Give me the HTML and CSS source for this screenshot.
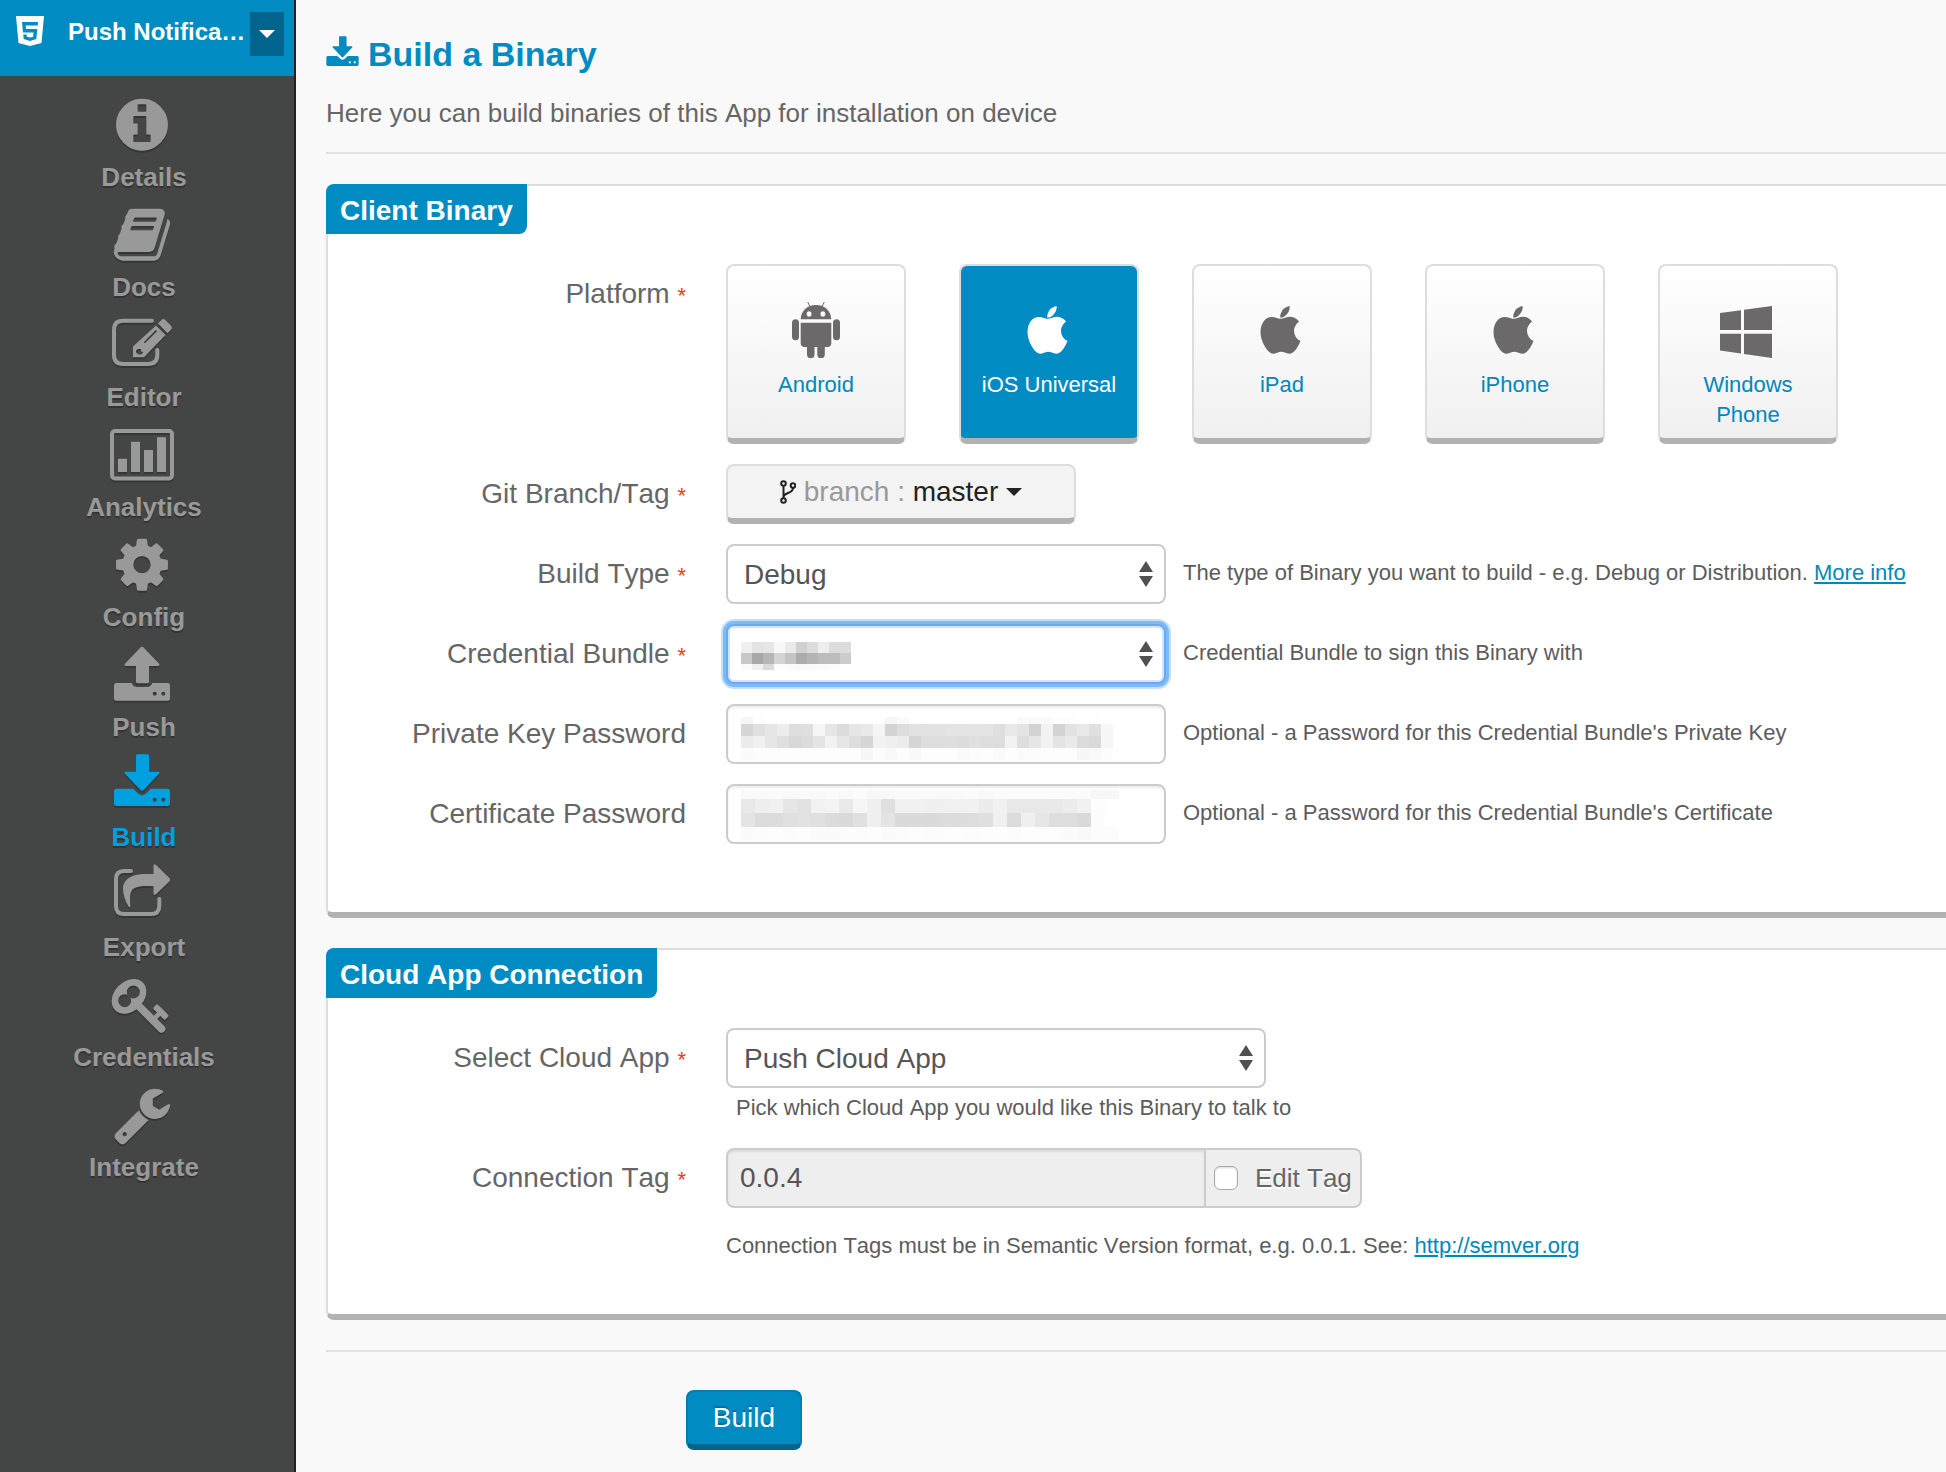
FILE: index.html
```html
<!DOCTYPE html>
<html lang="en">
<head>
<meta charset="utf-8">
<title>Build a Binary</title>
<meta name="viewport" content="width=device-width, initial-scale=1">
<link rel="stylesheet" href="styles.css">
<script src="mosaic.js" defer></script>
</head>
<body>
<svg class="defs" aria-hidden="true">
  <symbol id="apple" viewBox="0 0 60 56">
    <path transform="translate(3 4) scale(.0287)" d="M1585 1215q-39 125-123 250-129 196-257 196-49 0-140-32-86-32-151-32-61 0-142 33-81 34-132 34-152 0-301-259-147-261-147-503 0-228 113-374 113-144 284-144 72 0 177 30 104 30 138 30 45 0 143-34 102-34 173-34 119 0 213 65 52 36 104 100-79 67-114 118-65 94-65 207 0 124 69 223t158 126zm-376-1173q0 61-29 136-30 75-93 138-54 54-108 72-37 11-104 17 3-149 78-257 74-107 250-148 1 3 2.500 11t2.500 11q0 4 .500 10t.500 10z"/>
  </symbol>
  <symbol id="updown" viewBox="0 0 14 26">
    <path d="M7 0L14 11H0ZM0 15H14L7 26Z"/>
  </symbol>
  <symbol id="download" viewBox="4 1 56 52">
    <path d="M27.500 1.300H37.500Q39 1.300 39 2.800V18.700H48Q50.500 19 48.800 21L33.300 37.200Q32 38.500 30.700 37.200L15.200 21Q13.500 19 16 18.700H26V2.800Q26 1.300 27.500 1.300Z"/>
    <path fill-rule="evenodd" d="M6.500 35.700H22Q23.500 35.700 24.500 37L28 40.500Q32 43.800 36 40.500L39.500 37Q40.500 35.700 42 35.700H57.500Q60 35.700 60 38.200V50.500Q60 53 57.500 53H6.500Q4 53 4 50.500V38.200Q4 35.700 6.500 35.700ZM42.700 46.700a2 2 0 1 0 4 0a2 2 0 1 0-4 0ZM51.300 46.700a2 2 0 1 0 4 0a2 2 0 1 0-4 0Z"/>
  </symbol>
</svg>

<div class="layout">
  <aside class="sidebar">
    <div class="project">
      <svg class="project-logo" viewBox="0 0 28 30" aria-hidden="true"><path fill="#fff" d="M0 0H28L25.500 27 14 30 2.500 27Z"/><path class="project-mark" d="M6 6H22L21.700 9.500H9.700L10 13H21.300L20.300 23 14 25 7.700 23 7.300 18.500H10.600L10.900 20.700 14 21.600 17.100 20.700 17.500 16.400H7Z"/></svg>
      <span class="project-name">Push Notifica…</span>
      <button class="project-toggle" type="button" aria-label="Switch project"><span class="caret"></span></button>
    </div>
    <nav class="nav">
      <a class="nav-item" href="#details"><svg viewBox="0 0 68 64" aria-hidden="true"><path transform="translate(1.700 1.400) scale(.0338)" d="M1152 1376v-160q0-14-9-23t-23-9h-96v-512q0-14-9-23t-23-9h-320q-14 0-23 9t-9 23v160q0 14 9 23t23 9h96v320h-96q-14 0-23 9t-9 23v160q0 14 9 23t23 9h448q14 0 23-9t9-23zm-128-896v-160q0-14-9-23t-23-9h-192q-14 0-23 9t-9 23v160q0 14 9 23t23 9h192q14 0 23-9t9-23zm640 416q0 209-103 385.500t-279.500 279.500-385.500 103-385.500-103-279.500-279.500-103-385.500 103-385.500 279.500-279.500 385.500-103 385.500 103 279.500 279.500 103 385.500z"/></svg>Details</a>
      <a class="nav-item" href="#docs"><svg viewBox="0 0 68 64" aria-hidden="true"><path transform="translate(1.700 1.400) scale(.0338)" d="M1703 478q40 57 18 129l-275 906q-19 64-76.500 107.500t-122.500 43.500h-923q-77 0-148.500-53.500t-99.500-131.500q-24-67-2-127 0-4 3-27t4-37q1-8-3-21.500t-3-19.500q2-11 8-21t16.500-23.500 16.500-23.500q23-38 45-91.500t30-91.500q3-10 .5-30t-.5-28q3-11 17-28t17-23q21-36 42-92t25-90q1-9-2.500-32t.5-28q4-13 22-30.500t22-22.500q19-26 42.500-84.500t27.500-96.500q1-8-3-25.500t-2-26.500q2-8 9-18t18-23 17-21q8-12 16.500-30.500t15-35 16-36 19.500-32 26.500-23.500 36-11.500 47.500 5.500l-1 3q38-9 51-9h761q74 0 114 56t18 130l-274 906q-36 119-71.500 153.500t-128.500 34.500h-869q-27 0-38 15-11 16-1 43 24 70 144 70h923q29 0 56-15.500t35-41.500l300-987q7-22 5-57 38 15 59 43zm-1064 2q-4 13 2 22.500t20 9.500h608q13 0 25.500-9.500t16.500-22.500l21-64q4-13-2-22.500t-20-9.500h-608q-13 0-25.500 9.500t-16.500 22.500zm-83 256q-4 13 2 22.500t20 9.500h608q13 0 25.500-9.500t16.500-22.500l21-64q4-13-2-22.500t-20-9.500h-608q-13 0-25.500 9.500t-16.500 22.500z"/></svg>Docs</a>
      <a class="nav-item" href="#editor"><svg viewBox="0 0 68 64" aria-hidden="true"><path class="line" d="M42 7.700H13Q4 7.700 4 17V42Q4 51 13 51H38Q47.300 51 47.300 42V37"/><path fill-rule="evenodd" d="M46 12.500L55.500 22 34 44.300H23V33.500ZM33.800 29.200L34.900 30.300 47 18.200 45.900 17.100ZM26 37.500V39.500L28.500 41.500H31L33.500 39 31 38.500V36H28Z"/><path d="M48 10.500L51.500 7Q53.300 5 55.300 7L61 12.700Q62.700 14.700 61 16.700L57.500 20.200Z"/></svg>Editor</a>
      <a class="nav-item" href="#analytics"><svg viewBox="0 0 68 64" aria-hidden="true"><rect class="line" x="2" y="8" width="60" height="47.500" rx="3"/><path d="M8 35.700H17V49H8ZM21 18.700H30V49H21ZM34 27H43V49H34ZM47 14.300H56V49H47Z"/></svg>Analytics</a>
      <a class="nav-item" href="#config"><svg viewBox="0 0 68 64" aria-hidden="true"><path transform="translate(1.700 1.400) scale(.0338)" d="M1152 896q0-106-75-181t-181-75-181 75-75 181 75 181 181 75 181-75 75-181zm512-109v222q0 12-8 23t-20 13l-185 28q-19 54-39 91 35 50 107 138 10 12 10 25t-9 23q-27 37-99 108t-94 71q-12 0-26-9l-138-108q-44 23-91 38-16 136-29 186-7 28-36 28h-222q-14 0-24.500-8.500t-11.500-21.500l-28-184q-49-16-90-37l-141 107q-10 9-25 9-14 0-25-11-126-114-165-168-7-10-7-23 0-12 8-23 15-21 51-66.500t54-70.500q-27-50-41-99l-183-27q-13-2-21-12.500t-8-23.500v-222q0-12 8-23t19-13l186-28q14-46 39-92-40-57-107-138-10-12-10-24 0-10 9-23 26-36 98.500-107.500t94.500-71.500q13 0 26 10l138 107q44-23 91-38 16-136 29-186 7-28 36-28h222q14 0 24.500 8.500t11.500 21.500l28 184q49 16 90 37l142-107q9-9 24-9 13 0 25 10 129 119 165 170 7 8 7 22 0 12-8 23-15 21-51 66.500t-54 70.500q26 50 41 98l183 28q13 2 21 12.500t8 23.500z"/></svg>Config</a>
      <a class="nav-item" href="#push"><svg viewBox="0 0 68 64" aria-hidden="true"><path d="M30.700 4.300Q32 3 33.300 4.300L48.800 20.500Q50.500 22.700 48 23H39V38.800Q39 40.300 37.500 40.300H27.500Q26 40.300 26 38.800V23H16Q13.500 22.700 15.200 20.500Z"/><path fill-rule="evenodd" d="M6.500 40H21.700Q23 44 27 44H37Q41 44 42.300 40H57.500Q60 40 60 42.500V55.200Q60 57.700 57.500 57.700H6.500Q4 57.700 4 55.200V42.500Q4 40 6.500 40ZM42.700 50.700a2 2 0 1 0 4 0a2 2 0 1 0-4 0ZM51.300 50.700a2 2 0 1 0 4 0a2 2 0 1 0-4 0Z"/></svg>Push</a>
      <a class="nav-item is-active" href="#build" aria-current="page"><svg viewBox="0 0 68 64" aria-hidden="true"><use href="#download" x="4" y="1" width="56" height="52"/></svg>Build</a>
      <a class="nav-item" href="#export"><svg viewBox="0 0 68 64" aria-hidden="true"><path class="line" d="M21 8H14Q6 8 6 16V43Q6 51 14 51H41Q49.300 51 49.300 43V36"/><path d="M43.500 3Q43.500 0 46 2L59.300 15Q60.700 16.700 59.300 18.500L46 31.300Q43.500 33 43.500 30V23.300C30 22.500 24 24 21.500 28C19.500 32 20 38 20.300 43Q20 45.300 18.500 43.500C15 38 13 31 13 26C13 15 24 11 35 11H43.500Z"/></svg>Export</a>
      <a class="nav-item" href="#credentials"><svg viewBox="0 0 68 64" aria-hidden="true"><path transform="translate(1.700 1.700) scale(.0338)" d="M832 512q0-80-56-136t-136-56-136 56-56 136q0 42 19 83-41-19-83-19-80 0-136 56t-56 136 56 136 136 56 136-56 56-136q0-42-19-83 41 19 83 19 80 0 136-56t56-136zm851 704q0 17-49 66t-66 49q-9 0-28.500-16t-36.500-33-38.500-40-24.500-26l-96 96 220 220q28 28 28 68 0 42-39 81t-81 39q-40 0-68-28l-671-671q-176 131-365 131-163 0-265.500-102.500t-102.500-265.500q0-160 95-313t248-248 313-95q163 0 265.500 102.500t102.500 265.500q0 189-131 365l355 355 96-96q-3-3-26-24.500t-40-38.500-33-36.500-16-28.500q0-17 49-66t66-49q13 0 23 10 6 6 46 44.500t82 79.500 86.500 86 73 78 28.500 41z"/></svg>Credentials</a>
      <a class="nav-item" href="#integrate"><svg viewBox="0 0 68 64" aria-hidden="true"><path transform="translate(1.700 1.400) scale(.0338)" d="M448 1472q0-26-19-45t-45-19-45 19-19 45 19 45 45 19 45-19 19-45zm644-420l-682 682q-37 37-90 37-52 0-91-37l-106-108q-38-36-38-90 0-53 38-91l681-681q39 98 114.500 173.500t173.500 114.500zm634-435q0 39-23 106-47 134-164.500 217.500t-258.500 83.500q-185 0-316.500-131.500t-131.500-316.500 131.500-316.500 316.500-131.500q58 0 121.500 16.500t107.500 46.500q16 11 16 28t-16 28l-293 169v224l193 107q5-3 79-48.500t135.500-81 70.500-35.500q15 0 23.500 10t8.500 25z"/></svg>Integrate</a>
    </nav>
  </aside>

  <main class="main">
    <header class="page-header">
      <h1><svg class="title-icon" aria-hidden="true"><use href="#download"/></svg>Build a Binary</h1>
      <p>Here you can build binaries of this App for installation on device</p>
    </header>

    <form>
      <section class="panel">
        <h2>Client Binary</h2>
        <div class="rows">
          <div class="row">
            <span class="label" id="platform-label">Platform <b>*</b></span>
            <div class="tiles" role="group" aria-labelledby="platform-label">
              <button class="tile" type="button"><svg viewBox="0 0 60 56" aria-hidden="true"><path fill-rule="evenodd" d="M14.700 17.300C15 9 21 3 30 3S45 9 45.300 17.300ZM20.700 12a2.400 2.700 0 1 0 4.800 0a2.400 2.700 0 1 0-4.800 0ZM34.500 12a2.400 2.700 0 1 0 4.800 0a2.400 2.700 0 1 0-4.800 0Z"/><path d="M14.700 20.700H45.300V41Q45.300 45 41.300 45H38.800V52.500a3.700 3.700 0 0 1-7.500 0V45H28.500V52.500a3.700 3.700 0 0 1-7.500 0V45H18.700Q14.700 45 14.700 41Z"/><rect x="6" y="17.300" width="7" height="21" rx="3.500"/><rect x="47" y="17.300" width="7" height="21" rx="3.500"/><path class="antenna" d="M21.700 0L24 4.500M38.300 0L36 4.500"/></svg>Android</button>
              <button class="tile is-selected" type="button" aria-pressed="true"><svg aria-hidden="true"><use href="#apple"/></svg>iOS Universal</button>
              <button class="tile" type="button"><svg aria-hidden="true"><use href="#apple"/></svg>iPad</button>
              <button class="tile" type="button"><svg aria-hidden="true"><use href="#apple"/></svg>iPhone</button>
              <button class="tile" type="button"><svg viewBox="0 0 60 56" aria-hidden="true"><path d="M2 11L23 8.300V28H2ZM26 7.800L54 4V28H26ZM2 31.700H23V51.500L2 48.500ZM26 31.700H54V56L26 52Z"/></svg>Windows Phone</button>
            </div>
          </div>
          <div class="row">
            <span class="label" id="branch-label">Git Branch/Tag <b>*</b></span>
            <button class="branch" type="button" aria-describedby="branch-label"><svg viewBox="0 0 16 24" aria-hidden="true"><circle cx="3.500" cy="3.500" r="2.300"/><circle cx="13" cy="5.500" r="2.300"/><circle cx="3.500" cy="20.500" r="2.300"/><path d="M3.500 6V18M13 8C13 14 4 12 3.500 17"/></svg><span><span class="muted">branch :</span> master</span><span class="caret"></span></button>
          </div>
          <div class="row">
            <label class="label" for="build-type">Build Type <b>*</b></label>
            <div class="field"><select id="build-type"><option>Debug</option></select><svg class="updown" aria-hidden="true"><use href="#updown"/></svg></div>
            <p class="help">The type of Binary you want to build - e.g. Debug or Distribution. <a href="#more">More info</a></p>
          </div>
          <div class="row">
            <label class="label" for="bundle">Credential Bundle <b>*</b></label>
            <div class="field"><select id="bundle" class="is-focused"><option></option></select><svg class="updown" aria-hidden="true"><use href="#updown"/></svg><svg class="mosaic" data-mosaic="bundle" aria-hidden="true"></svg></div>
            <p class="help">Credential Bundle to sign this Binary with</p>
          </div>
          <div class="row">
            <label class="label" for="key-password">Private Key Password</label>
            <div class="field"><input id="key-password" type="password"><svg class="mosaic" data-mosaic="key" aria-hidden="true"></svg></div>
            <p class="help">Optional - a Password for this Credential Bundle's Private Key</p>
          </div>
          <div class="row">
            <label class="label" for="cert-password">Certificate Password</label>
            <div class="field"><input id="cert-password" type="password"><svg class="mosaic" data-mosaic="cert" aria-hidden="true"></svg></div>
            <p class="help">Optional - a Password for this Credential Bundle's Certificate</p>
          </div>
        </div>
      </section>

      <section class="panel panel-cloud">
        <h2>Cloud App Connection</h2>
        <div class="rows">
          <div class="row">
            <label class="label" for="cloud-app">Select Cloud App <b>*</b></label>
            <div class="stack">
              <div class="field field-wide"><select id="cloud-app"><option>Push Cloud App</option></select><svg class="updown" aria-hidden="true"><use href="#updown"/></svg></div>
              <p class="help-below help-indent">Pick which Cloud App you would like this Binary to talk to</p>
            </div>
          </div>
          <div class="row">
            <label class="label" for="tag">Connection Tag <b>*</b></label>
            <div class="stack stack-loose">
              <div class="group">
                <input id="tag" type="text" value="0.0.4" readonly>
                <label class="addon"><input type="checkbox">Edit Tag</label>
              </div>
              <p class="help-below">Connection Tags must be in Semantic Version format, e.g. 0.0.1. See: <a href="http://semver.org">http://semver.org</a></p>
            </div>
          </div>
        </div>
      </section>

      <div class="actions"><button class="submit" type="submit">Build</button></div>
    </form>
  </main>
</div>
</body>
</html>
```
FILE: styles.css
```css
* { box-sizing: border-box; }

:root {
  --blue: #008cc2;
  --blue-dark: #00648c;
  --text: #666;
  --rule: #e2e2e2;
  --edge: #b2b2b2;
}

body {
  margin: 0;
  background: #f9f9f9;
  color: var(--text);
  font-family: "Liberation Sans", Arial, sans-serif;
  font-size: 28px;
  font-kerning: none;
}

h1, h2, p { margin: 0; }
button, input, select { font: inherit; font-kerning: none; margin: 0; }
a { color: #0088ba; }
.defs { display: none; }

.layout { display: flex; min-height: 100vh; overflow: hidden; }

/* Sidebar */
.sidebar {
  flex: 0 0 296px;
  background: #444645;
  border-right: 2px solid #222;
}

.project {
  display: flex;
  align-items: flex-start;
  height: 76px;
  padding: 12px 10px 0 16px;
  background: var(--blue);
  color: #fff;
}
.project-logo { width: 28px; height: 30px; margin-top: 4px; }
.project-mark { fill: var(--blue); }
.project-name {
  flex: 1;
  margin-left: 24px;
  font-size: 24px;
  font-weight: bold;
  line-height: 40px;
  white-space: nowrap;
}
.project-toggle {
  display: grid;
  place-items: center;
  width: 34px;
  height: 44px;
  padding: 0;
  border: 0;
  background: var(--blue-dark);
  color: #fff;
}

.caret {
  border: 8px solid transparent;
  border-top-color: currentColor;
  border-bottom: 0;
}

.nav { display: grid; gap: 6px; padding: 17px 6px 30px 0; }
.nav-item {
  display: flex;
  flex-direction: column;
  align-items: center;
  color: #999;
  fill: currentColor;
  font-size: 26px;
  font-weight: bold;
  line-height: 40px;
  text-decoration: none;
  text-shadow: 0 2px 0 #333;
}
.nav-item svg { width: 68px; height: 64px; overflow: visible; filter: drop-shadow(0 2px 0 #353736); }
.nav-item.is-active { color: #00a0df; }
.line { fill: none; stroke: currentColor; stroke-width: 4; stroke-linecap: round; }

/* Page header */
.main { flex: 1; min-width: 0; padding: 34px 0 22px 30px; }
.page-header { padding-bottom: 21px; border-bottom: 2px solid var(--rule); margin-bottom: 30px; }
h1 {
  display: flex;
  gap: 9px;
  color: var(--blue);
  font-size: 34px;
  line-height: 40px;
}
.title-icon { width: 33px; height: 30px; margin-top: 2px; fill: currentColor; }
.page-header p { margin-top: 21px; font-size: 26px; line-height: 36px; }

/* Panels */
.panel {
  margin-bottom: 30px;
  padding-bottom: 68px;
  border: 2px solid #ddd;
  border-right: 0;
  border-bottom: 6px solid var(--edge);
  border-radius: 8px 0 0 8px;
  background: #fff;
}
.panel-cloud { padding-bottom: 48px; }
h2 {
  width: fit-content;
  margin: -2px 0 0 -2px;
  padding: 4px 14px 0;
  border-radius: 8px 0;
  background: var(--blue);
  color: #fff;
  font-size: 28px;
  line-height: 46px;
}
.rows { display: grid; gap: 20px; padding-top: 30px; }
.row { display: flex; align-items: flex-start; }
.label {
  flex: 0 0 358px;
  margin-right: 40px;
  line-height: 60px;
  text-align: right;
  white-space: nowrap;
}
.label b { color: #f03a22; font-size: 22px; font-weight: normal; line-height: 30px; }

/* Platform tiles */
.tiles { display: flex; gap: 53px; }
.tile {
  display: flex;
  flex-direction: column;
  align-items: center;
  justify-content: flex-start;
  gap: 12px;
  width: 180px;
  height: 180px;
  padding: 36px 14px 0;
  border: 2px solid #ddd;
  border-bottom: 6px solid var(--edge);
  border-radius: 8px;
  background: linear-gradient(#fff, #f0f0f0);
  color: #0088ba;
  fill: #6b696a;
  font-size: 22px;
  line-height: 30px;
}
.tile svg { flex: none; width: 60px; height: 56px; }
.tile.is-selected { background: var(--blue); color: #fff; fill: #fff; }
.antenna { fill: none; stroke: #6b696a; stroke-width: 1; }

/* Controls */
.branch {
  display: flex;
  align-items: center;
  justify-content: center;
  gap: 8px;
  width: 350px;
  height: 60px;
  padding: 0;
  border: 2px solid #ddd;
  border-bottom: 6px solid var(--edge);
  border-radius: 8px;
  background: #f3f3f3;
  color: #222;
  line-height: 52px;
}
.branch svg { width: 16px; height: 24px; fill: none; stroke: currentColor; stroke-width: 2; }
.muted { color: #999; }

.field { position: relative; width: 440px; }
.field-wide { width: 540px; }
select, .field input, .group > input {
  display: block;
  width: 100%;
  height: 60px;
  border: 2px solid #ccc;
  border-radius: 8px;
  background: #fff;
  color: #555;
  outline: 0;
}
select { padding: 0 40px 0 16px; appearance: none; }
.field input, .group > input { padding: 0 12px; box-shadow: inset 0 2px 2px rgba(0, 0, 0, .08); }
.is-focused {
  border-color: #6da9ec;
  box-shadow: 0 0 0 3px #7dbaf9, 0 0 0 5px #c4e1fb, inset 0 0 0 2px #cfe5fb;
}
.updown {
  position: absolute;
  top: 17px;
  right: 13px;
  width: 14px;
  height: 26px;
  fill: #505050;
  pointer-events: none;
}
.mosaic {
  position: absolute;
  top: 4px;
  left: 15px;
  width: 400px;
  height: 54px;
  pointer-events: none;
  shape-rendering: crispEdges;
}

.help { margin-left: 17px; color: #5c5c5c; font-size: 22px; line-height: 58px; white-space: nowrap; }
.help-below { color: #5c5c5c; font-size: 22px; line-height: 40px; }
.help-indent { padding-left: 10px; }
.stack-loose { display: grid; gap: 18px; }

.group { display: flex; }
.group > input { width: 480px; border-radius: 8px 0 0 8px; background: #eee; }
.addon {
  display: flex;
  align-items: center;
  gap: 17px;
  width: 158px;
  height: 60px;
  margin-left: -2px;
  padding-left: 8px;
  border: 2px solid #ccc;
  border-radius: 0 8px 8px 0;
  background: #eee;
  font-size: 26px;
  text-shadow: 0 2px 0 #fff;
  white-space: nowrap;
}
.addon input {
  flex: none;
  width: 24px;
  height: 24px;
  border: 1px solid #aaa;
  border-radius: 6px;
  background: #fff;
  box-shadow: inset 0 1px 2px rgba(0, 0, 0, .15);
  appearance: none;
}

.actions { padding: 38px 0 0 360px; border-top: 2px solid var(--rule); }
.submit {
  display: block;
  width: 116px;
  height: 60px;
  padding: 0;
  border: 2px solid #007eaf;
  border-bottom: 6px solid var(--blue-dark);
  border-radius: 8px;
  background: var(--blue);
  color: #fff;
  line-height: 52px;
  text-shadow: 0 -2px 0 #006f9b;
}
```
FILE: mosaic.js
```js
// Draws the redaction blocks over private values.
// Each row: [y, height, grey levels as two-digit hex, one per cell].
const mosaics = {
  bundle: { cell: 11, rows: [
    [14, 11, "f0 e4 e6 f8 ea d0 dc ee dc dc"],
    [25, 11, "c8 a8 b6 d4 c4 ac b4 bc bc cc"],
    [36, 6, "fb f0 da fd fb f9 fa fb fd ff"]
  ] },
  key: { cell: 12, rows: [
    [9, 7, "f6 fd ff ff fe fe ff fe ff ff ff ff f6 fa ff fe ff ff ff fe ff ff ff fa fa fa fd fd ff fd"],
    [16, 12, "d6 e0 e6 ed dd df f6 e6 dc e6 e9 f5 d3 dd e2 e2 e2 e4 e4 e4 e4 df e8 e4 d2 f2 d3 e2 e8 e0 f7"],
    [28, 12, "ec f0 e6 df d8 dc e4 f2 e6 dd d6 f2 f0 ec d5 dd dd de dc e0 dd dd f2 dd e6 f2 e4 ea dc d9 f7"],
    [40, 12, "fb fd fd fd fd fd fd fd fd fd f7 fc f9 fd f9 fd fd fd fa fc fd fa fd fb fc fd fd fd f7 f9 fc"]
  ] },
  cert: { cell: 14, rows: [
    [2, 9, "f9 f9 fa f9 fa f9 fb f9 fb f8 f8 fa fa fa f9 fa fb f9 fb fb fb fb fb fb fb f7 f7"],
    [11, 14, "e8 ee f0 e6 e2 f2 f3 ea f6 f0 e0 f1 f1 f0 f0 f1 f1 ec f1 e8 e8 e8 e9 ec f1 fd"],
    [25, 14, "e4 dc dc e0 e2 e0 dc da e0 f0 e4 da da da dc dc dd df f0 dc f0 e6 dd dd d9 fc"],
    [39, 13, "fb fc fd fc fd fb fb fc fc fd fb fc fd fc fc fd fc fd fd fc fd fd fd fb f9 fc fc"]
  ] }
};

for (const svg of document.querySelectorAll("[data-mosaic]")) {
  const { cell, rows } = mosaics[svg.dataset.mosaic];
  for (const [y, height, levels] of rows) {
    levels.split(" ").forEach((level, i) => {
      const rect = document.createElementNS("http://www.w3.org/2000/svg", "rect");
      rect.setAttribute("x", i * cell);
      rect.setAttribute("y", y);
      rect.setAttribute("width", cell);
      rect.setAttribute("height", height);
      rect.setAttribute("fill", "#" + level.repeat(3));
      svg.append(rect);
    });
  }
}
```
